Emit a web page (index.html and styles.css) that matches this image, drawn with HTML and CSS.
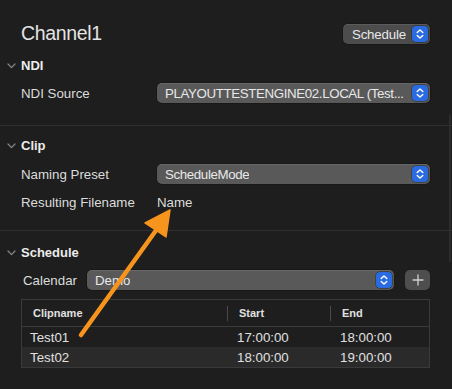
FILE: index.html
```html
<!DOCTYPE html>
<html>
<head>
<meta charset="utf-8">
<link rel="stylesheet" href="styles.css">
</head>
<body>
<div class="page">
  <div class="top">
    <div class="title">Channel1</div>
    <div class="popup popup-small">
      <span class="popup-text">Schedule</span>
      <span class="stepper"><svg width="16" height="16" viewBox="0 0 16 16"><path d="M5.2 6.6 L8 3.9 L10.8 6.6 M5.2 9.4 L8 12.1 L10.8 9.4" fill="none" stroke="#fff" stroke-width="1.4" stroke-linecap="round" stroke-linejoin="round"/></svg></span>
    </div>
  </div>

  <div class="sec-head sec-first">
    <svg class="chev" width="9" height="6" viewBox="0 0 9 6"><path d="M1 1 L4.5 4.6 L8 1" fill="none" stroke="#8a8a8a" stroke-width="1.2" stroke-linecap="round" stroke-linejoin="round"/></svg>
    <span>NDI</span>
  </div>
  <div class="row row-ndi">
    <div class="label">NDI Source</div>
    <div class="popup popup-wide">
      <span class="popup-text">PLAYOUTTESTENGINE02.LOCAL (Test...</span>
      <span class="stepper"><svg width="16" height="16" viewBox="0 0 16 16"><path d="M5.2 6.6 L8 3.9 L10.8 6.6 M5.2 9.4 L8 12.1 L10.8 9.4" fill="none" stroke="#fff" stroke-width="1.4" stroke-linecap="round" stroke-linejoin="round"/></svg></span>
    </div>
  </div>

  <div class="sep sep-1"></div>

  <div class="sec-head sec-clip">
    <svg class="chev" width="9" height="6" viewBox="0 0 9 6"><path d="M1 1 L4.5 4.6 L8 1" fill="none" stroke="#8a8a8a" stroke-width="1.2" stroke-linecap="round" stroke-linejoin="round"/></svg>
    <span>Clip</span>
  </div>
  <div class="row row-naming">
    <div class="label">Naming Preset</div>
    <div class="popup popup-wide">
      <span class="popup-text">ScheduleMode</span>
      <span class="stepper"><svg width="16" height="16" viewBox="0 0 16 16"><path d="M5.2 6.6 L8 3.9 L10.8 6.6 M5.2 9.4 L8 12.1 L10.8 9.4" fill="none" stroke="#fff" stroke-width="1.4" stroke-linecap="round" stroke-linejoin="round"/></svg></span>
    </div>
  </div>
  <div class="row row-result">
    <div class="label">Resulting Filename</div>
    <div class="value">Name</div>
  </div>

  <div class="sep sep-2"></div>

  <div class="sec-head sec-sched">
    <svg class="chev" width="9" height="6" viewBox="0 0 9 6"><path d="M1 1 L4.5 4.6 L8 1" fill="none" stroke="#8a8a8a" stroke-width="1.2" stroke-linecap="round" stroke-linejoin="round"/></svg>
    <span>Schedule</span>
  </div>
  <div class="row row-cal">
    <div class="label label-cal">Calendar</div>
    <div class="popup popup-cal">
      <span class="popup-text">Demo</span>
      <span class="stepper"><svg width="16" height="16" viewBox="0 0 16 16"><path d="M5.2 6.6 L8 3.9 L10.8 6.6 M5.2 9.4 L8 12.1 L10.8 9.4" fill="none" stroke="#fff" stroke-width="1.4" stroke-linecap="round" stroke-linejoin="round"/></svg></span>
    </div>
    <div class="plus"><svg width="12" height="12" viewBox="0 0 12 12"><path d="M6 1 V11 M1 6 H11" stroke="#d0d0d0" stroke-width="1.3" stroke-linecap="round"/></svg></div>
  </div>

  <div class="table">
    <div class="thead">
      <div class="th th-clip">Clipname</div>
      <div class="th th-start">Start</div>
      <div class="th th-end">End</div>
    </div>
    <div class="tr">
      <div class="td td-clip">Test01</div>
      <div class="td">17:00:00</div>
      <div class="td">18:00:00</div>
    </div>
    <div class="tr tr-alt">
      <div class="td td-clip">Test02</div>
      <div class="td">18:00:00</div>
      <div class="td">19:00:00</div>
    </div>
  </div>
</div>

<div class="scroll-edge"></div>

<svg class="arrow" width="452" height="389" viewBox="0 0 452 389">
  <line x1="81" y1="335" x2="157" y2="229" stroke="#f7941d" stroke-width="4.5" stroke-linecap="round"/>
  <polygon points="170,210 145,223 166,237" fill="#f7941d" stroke="#f7941d" stroke-width="1.5" stroke-linejoin="round"/>
</svg>
</body>
</html>
```

FILE: styles.css
```css
html, body {
  margin: 0;
  padding: 0;
}
body {
  width: 452px;
  height: 389px;
  overflow: hidden;
  background: #1e1e1e;
  font-family: "Liberation Sans", Arial, sans-serif;
  font-size: 13.3px;
  color: #dedede;
  position: relative;
}
.page {
  display: flex;
  flex-direction: column;
  padding: 0 22px 0 21px;
}
.top {
  margin-top: 24px;
  height: 20px;
  display: flex;
  align-items: center;
  justify-content: space-between;
}
.title {
  font-size: 19.5px;
  letter-spacing: -0.35px;
  color: #e4e4e4;
  line-height: 20px;
  margin-top: -2px;
}
.popup {
  height: 20px;
  box-sizing: border-box;
  display: flex;
  align-items: center;
  justify-content: space-between;
  background: #595959;
  border-radius: 5px;
  box-shadow: inset 0 0.5px 0 rgba(255,255,255,0.18), 0 0 0 0.5px rgba(0,0,0,0.4);
  padding-left: 8px;
  padding-right: 2px;
  color: #e8e8e8;
}
.popup-small {
  width: 87px;
  padding-left: 9px;
  background: #4c4c4c;
}
.popup-small .popup-text {
  letter-spacing: -0.2px;
}
.popup-text {
  white-space: nowrap;
  overflow: hidden;
}
.stepper {
  width: 16px;
  height: 16px;
  flex: none;
  border-radius: 4px;
  background: #2b6be0;
  box-shadow: 0 0 0 0.5px rgba(0,0,0,0.5);
  display: flex;
}
.sec-head {
  height: 18px;
  display: flex;
  align-items: center;
  margin-left: -14px;
  font-weight: bold;
  font-size: 13px;
  color: #ececec;
}
.chev {
  width: 9px;
  margin-left: 0;
  margin-right: 5px;
  margin-top: 1px;
}
.sec-first { margin-top: 12px; }
.row {
  display: flex;
  align-items: center;
  height: 20px;
}
.row-ndi { margin-top: 9px; }
.label {
  width: 136px;
  flex: none;
  color: #dcdcdc;
}
.popup-wide {
  flex: 1;
}
.popup-wide .popup-text {
  letter-spacing: -0.37px;
}
.sep {
  height: 1px;
  background: #2f2f2f;
  margin-left: -21px;
  margin-right: -22px;
}
.sep-1 { margin-top: 22px; }
.sec-clip { margin-top: 10px; }
.row-naming { margin-top: 10px; }
.row-result { margin-top: 9px; height: 18px; }
.value { color: #dcdcdc; }
.sep-2 { margin-top: 19px; }
.sec-sched { margin-top: 12px; }
.row-cal { margin-top: 9px; }
.label-cal {
  width: 64px;
  margin-left: 2px;
}
.popup-cal {
  flex: 1;
}
.plus {
  width: 25px;
  height: 20px;
  flex: none;
  margin-left: 11px;
  background: #4e4e4e;
  border-radius: 5px;
  display: flex;
  align-items: center;
  justify-content: center;
}
.table {
  margin-top: 9px;
  border: 1px solid #3a3a3a;
  display: flex;
  flex-direction: column;
}
.thead, .tr {
  display: grid;
  grid-template-columns: 205px 103px 1fr;
}
.thead {
  height: 27px;
  border-bottom: 1px solid #3a3a3a;
  box-sizing: border-box;
  align-items: center;
}
.th {
  font-size: 11px;
  font-weight: bold;
  color: #e0e0e0;
  padding-left: 11px;
  height: 15px;
  line-height: 15px;
}
.th-start, .th-end {
  border-left: 1px solid #4a4a4a;
}
.tr {
  height: 20px;
  align-items: center;
}
.tr-alt {
  background: #2a2a2a;
}
.td {
  color: #e0e0e0;
  padding-left: 10px;
}
.td-clip {
  padding-left: 8px;
}
.scroll-edge {
  position: absolute;
  left: 449px;
  top: 115px;
  width: 2px;
  height: 147px;
  background: #2c2c2c;
}
.arrow {
  position: absolute;
  left: 0;
  top: 0;
  pointer-events: none;
}
```
